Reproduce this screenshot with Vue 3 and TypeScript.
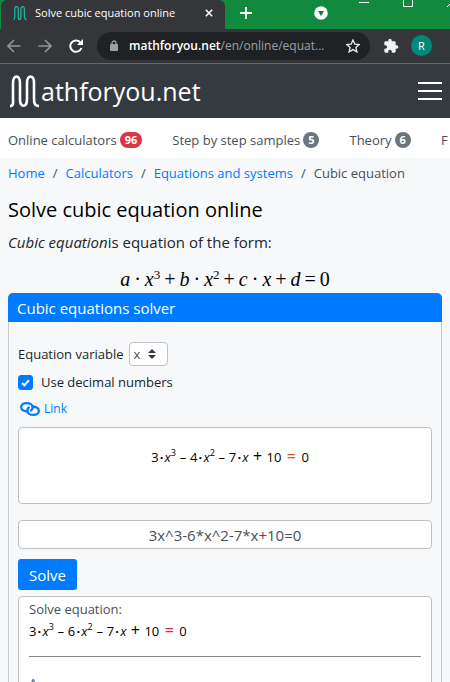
<script setup lang="ts">
import { ref } from 'vue'

type Kind = 'num' | 'dot' | 'var' | 'sup' | 'op' | 'sum' | 'eq'
interface Token { kind: Kind; text: string }

const t = (kind: Kind, text: string): Token => ({ kind, text })

// Tokens of a cubic equation in expanded form with the given quadratic coefficient.
const cubic = (quadratic: number): Token[] => [
  t('num', '3'), t('dot', '·'), t('var', 'x'), t('sup', '3'), t('op', '–'),
  t('num', String(quadratic)), t('dot', '·'), t('var', 'x'), t('sup', '2'), t('op', '–'),
  t('num', '7'), t('dot', '·'), t('var', 'x'), t('sum', '+'),
  t('num', '10'), t('eq', '='), t('num', '0'),
]

const preview = cubic(4)
const result = cubic(6)

const general: Token[] = [
  t('var', 'a'), t('dot', '·'), t('var', 'x'), t('sup', '3'), t('op', '+'),
  t('var', 'b'), t('dot', '·'), t('var', 'x'), t('sup', '2'), t('op', '+'),
  t('var', 'c'), t('dot', '·'), t('var', 'x'), t('op', '+'),
  t('var', 'd'), t('op', '='), t('num', '0'),
]

const sections = [
  { label: 'Online calculators', count: '96', tone: 'red' },
  { label: 'Step by step samples', count: '5', tone: 'grey' },
  { label: 'Theory', count: '6', tone: 'grey' },
  { label: 'F', count: '', tone: '' },
]
const crumbs = ['Home', 'Calculators', 'Equations and systems']

const variable = ref('x')
const decimals = ref(true)
const expression = ref('3x^3-6*x^2-7*x+10=0')
</script>

<template>
  <div class="window">
    <div class="tabs">
      <div class="tab">
        <svg class="tab-logo" viewBox="0 0 32 34" aria-hidden="true">
          <path d="M1 32C4 32 4 28 4 24V9C4 0 12 0 12 9V25C12 34 18 34 18 25V9C18 0 26 0 26 9V24C26 29 27 32 31 32" />
        </svg>
        <span class="tab-title">Solve cubic equation online</span>
        <button class="icon-btn tab-close" aria-label="Close tab">
          <svg width="8" height="8" viewBox="0 0 8 8"><path d="M.8.8l6.4 6.4M7.2.8L.8 7.2" stroke="#fff" stroke-width="1.6" /></svg>
        </button>
      </div>
      <button class="icon-btn new-tab" aria-label="New tab">
        <svg width="12" height="12" viewBox="0 0 12 12"><path d="M6 0v12M0 6h12" stroke="#fff" stroke-width="1.8" /></svg>
      </button>
      <button class="icon-btn tab-search" aria-label="Search tabs">
        <svg width="14" height="14" viewBox="0 0 14 14"><circle cx="7" cy="7" r="6.8" fill="#fff" /><path d="M4 5h6L7 10z" fill="#17793b" /></svg>
      </button>
      <div class="window-controls">
        <button class="icon-btn" aria-label="Minimize"><svg width="10" height="10" viewBox="0 0 10 10"><path d="M0 5.5h10" stroke="#fff" /></svg></button>
        <button class="icon-btn" aria-label="Maximize"><svg width="10" height="10" viewBox="0 0 10 10"><path d="M.5.5h9v9h-9z" fill="none" stroke="#fff" /></svg></button>
        <button class="icon-btn" aria-label="Close"><svg width="10" height="10" viewBox="0 0 10 10"><path d="M0 0l10 10M10 0L0 10" stroke="#fff" /></svg></button>
      </div>
    </div>

    <div class="toolbar">
      <button class="icon-btn" aria-label="Back">
        <svg width="14" height="14" viewBox="0 0 14 14"><path d="M13.5 7H1.5M7 1L1 7l6 6" fill="none" stroke="#929497" stroke-width="1.6" /></svg>
      </button>
      <button class="icon-btn" aria-label="Forward">
        <svg width="14" height="14" viewBox="0 0 14 14"><path d="M.5 7h12M7 1l6 6-6 6" fill="none" stroke="#929497" stroke-width="1.6" /></svg>
      </button>
      <button class="icon-btn" aria-label="Reload">
        <svg width="14" height="14" viewBox="0 0 14 14"><path d="M12.4 9A5.7 5.7 0 1 1 11.2 3.2" fill="none" stroke="#fff" stroke-width="2" /><path d="M14 0v6H8z" fill="#fff" /></svg>
      </button>
      <div class="address">
        <svg width="8" height="11" viewBox="0 0 8 11" aria-hidden="true"><path d="M2 5V3a2 2 0 0 1 4 0v2" fill="none" stroke="#9aa0a6" stroke-width="1.3" /><rect y="4" width="8" height="7" rx="1" fill="#9aa0a6" /></svg>
        <span class="url"><b>mathforyou.net</b>/en/online/equat...</span>
        <button class="icon-btn" aria-label="Bookmark this page">
          <svg width="14" height="14" viewBox="0 0 14 14"><path d="M7 1l1.8 4.1 4.4.4-3.3 3 1 4.4L7 10.6l-3.9 2.3 1-4.4-3.3-3 4.4-.4z" fill="none" stroke="#e8eaed" stroke-width="1.3" /></svg>
        </button>
      </div>
      <button class="icon-btn extensions" aria-label="Extensions">
        <svg width="16" height="16" viewBox="0 0 24 24"><path d="M20.5 11H19V7c0-1.1-.9-2-2-2h-4V3.5a2.5 2.5 0 0 0-5 0V5H4c-1.1 0-2 .9-2 2v3.800h1.500a2.700 2.700 0 0 1 0 5.400H2V20c0 1.100.900 2 2 2h3.800v-1.500a2.700 2.700 0 0 1 5.400 0V22H17c1.100 0 2-.900 2-2v-4h1.500a2.500 2.500 0 0 0 0-5z" fill="#f1f3f4" /></svg>
      </button>
      <button class="avatar" aria-label="Profile">R</button>
    </div>

    <header class="site-header">
      <a class="brand" href="#">
        <svg width="32" height="34" viewBox="0 0 32 34" aria-hidden="true">
          <path d="M2 32C6 32 5 28 5 24V9C5 .5 12 .5 12 9V25C12 34 19 34 19 25V9C19 .5 26 .5 26 9V24C26 28 26 32 31 32" fill="none" stroke="#fff" stroke-width="2.6" />
        </svg>
        <span>athforyou.net</span>
      </a>
      <button class="icon-btn" aria-label="Menu">
        <svg width="24" height="18" viewBox="0 0 24 18"><path d="M0 1h24M0 9h24M0 17h24" stroke="#fff" stroke-width="2" /></svg>
      </button>
    </header>

    <nav class="sections" aria-label="Sections">
      <a v-for="s in sections" :key="s.label" href="#">
        {{ s.label }}<span v-if="s.count" class="badge" :class="s.tone">{{ s.count }}</span>
      </a>
    </nav>

    <main>
      <nav class="crumbs" aria-label="Breadcrumb">
        <template v-for="c in crumbs" :key="c">
          <a href="#">{{ c }}</a><span class="slash">/</span>
        </template>
        <span>Cubic equation</span>
      </nav>

      <h1>Solve cubic equation online</h1>
      <p class="intro"><em>Cubic equation</em>is equation of the form:</p>
      <div class="general">
        <span v-for="(k, i) in general" :key="i" :class="k.kind">{{ k.text }}</span>
      </div>

      <section class="card">
        <h2>Cubic equations solver</h2>
        <form class="solver" @submit.prevent>
          <div class="field variable">
            <label for="variable">Equation variable</label>
            <span class="select">
              <select id="variable" v-model="variable"><option>x</option></select>
              <svg width="8" height="10" viewBox="0 0 8 10" aria-hidden="true"><path d="M0 4l4-4 4 4zM0 6l4 4 4-4z" fill="#343a40" /></svg>
            </span>
          </div>
          <div class="field decimals">
            <span class="check">
              <input id="decimals" v-model="decimals" type="checkbox" />
              <svg v-if="decimals" width="9" height="8" viewBox="0 0 9 8" aria-hidden="true"><path d="M1 4l2.300 2.300L8 1.300" fill="none" stroke="#fff" stroke-width="2" /></svg>
            </span>
            <label for="decimals">Use decimal numbers</label>
          </div>
          <a class="link" href="#">
            <svg width="20" height="14" viewBox="0 0 20 14" aria-hidden="true">
              <g fill="none" stroke="#007bff" stroke-width="2.200">
                <path d="M8.500 9.300C4.500 9.800 1.100 8 1.100 5.200 1.100 2.700 3.500 1.100 6.600 1.100c3.400 0 6.100 1.700 6.100 4.200 0 1.600-.9 2.900-2.400 3.600" />
                <path d="M11.500 4.700c4-.5 7.400 1.300 7.400 4.100 0 2.500-2.400 4.100-5.500 4.100-3.400 0-6.100-1.700-6.100-4.200 0-1.600.9-2.900 2.400-3.600" />
              </g>
            </svg>
            <span>Link</span>
          </a>
          <div class="preview box">
            <div class="equation"><span v-for="(k, i) in preview" :key="i" :class="k.kind">{{ k.text }}</span></div>
          </div>
          <input v-model="expression" class="expression" type="text" aria-label="Equation" />
          <button class="solve" type="submit">Solve</button>
          <div class="result box">
            <p>Solve equation:</p>
            <div class="equation red-eq"><span v-for="(k, i) in result" :key="i" :class="k.kind">{{ k.text }}</span></div>
            <hr />
            <p class="next">A</p>
          </div>
        </form>
      </section>
    </main>
  </div>
</template>

<style>
body { margin: 0; background: #f7f8fa; }
</style>

<style scoped>
* { box-sizing: border-box; }
.window {
  display: flex; flex-direction: column; height: 100vh; overflow: hidden;
  font-family: "Open Sans", "Noto Sans", sans-serif; font-size: 13px; line-height: 20px;
  color: #212529; background: #f7f8fa;
}
.window > * { flex-shrink: 0; }
a { color: #007bff; text-decoration: none; }
button, input, select { font: inherit; margin: 0; }
svg { display: block; flex-shrink: 0; }
.icon-btn { display: flex; padding: 0; border: 0; background: none; }

.tabs { display: flex; align-items: center; height: 29px; padding-left: 1px; background: #128a3d; overflow: hidden; }
.tabs > * { flex-shrink: 0; }
.tab { display: flex; align-items: center; width: 224px; height: 29px; padding: 0 12px 4px; background: #35363a; border-radius: 6px 6px 0 0; color: #fff; font-size: 11px; }
.tab-logo { width: 14px; height: 16px; fill: none; stroke: #1fb5a0; stroke-width: 3; }
.tab-title { margin-left: 8px; white-space: nowrap; }
.tab-close { margin-left: auto; }
.new-tab { margin: 0 0 4px 15px; }
.tab-search { margin: 0 0 4px 62px; }
.window-controls { display: flex; gap: 34px; margin-left: 31px; margin-bottom: 26px; }

.toolbar { display: flex; align-items: center; gap: 17px; height: 35px; padding: 0 18px 1px 7px; background: #35363a; border-bottom: 1px solid #66676a; }
.address { display: flex; align-items: center; flex: 1; min-width: 0; height: 28px; margin-left: -3px; padding: 0 10px 0 13px; border-radius: 14px; background: #202124; color: #9aa0a6; font-size: 12px; }
.url { flex: 1; margin-left: 11px; white-space: nowrap; overflow: hidden; }
.url b { color: #fff; font-weight: 600; }
.extensions { margin-left: -4px; }
.avatar { width: 21px; height: 21px; margin-left: -5px; padding: 0; border: 0; border-radius: 50%; background: #00897b; color: #fff; font-size: 11px; line-height: 21px; }

.site-header { display: flex; align-items: center; justify-content: space-between; height: 54px; padding: 0 8px; background: #343a40; }
.brand { display: flex; align-items: center; gap: 1px; color: #fff; font-size: 25px; line-height: 32px; }

.sections { display: flex; gap: 30px; height: 40px; align-items: center; padding: 4px 8px 0; overflow: hidden; background: #fff; white-space: nowrap; }
.sections a { display: flex; align-items: center; gap: 3px; color: #495057; }
.badge { padding: 0 5px; border-radius: 8px; color: #fff; font-size: 11px; font-weight: 700; line-height: 16px; }
.red { background: #dc3545; }
.grey { background: #6c757d; }

main { padding: 0 8px; }
.crumbs { display: flex; gap: 8px; padding-top: 5px; white-space: nowrap; color: #495057; }
h1 { margin: 15px 0 0; color: #000; font-size: 20px; font-weight: 400; line-height: 24px; }
.intro { margin: 10px 0 0; font-size: 15px; }

.general { display: flex; justify-content: center; align-items: baseline; height: 34px; margin-top: 7px; color: #000; font-family: "Liberation Serif", serif; font-size: 20px; line-height: 40px; }
.general .var { font-style: italic; }
.general .dot { padding: 0 4px; }
.general .op { padding: 0 4px; }
.general .sup { font-size: 13px; line-height: 13px; position: relative; top: -7px; }

.card { border: 1px solid #c9cbcd; border-radius: 5px; }
h2 { margin: -1px -1px 0; padding: 5px 9px 4px; border-radius: 5px 5px 0 0; background: #007bff; color: #fff; font-size: 15px; font-weight: 400; line-height: 20px; }
.solver { display: flex; flex-direction: column; padding: 20px 9px 0; }
.field { display: flex; align-items: center; }
.variable { gap: 5px; height: 24px; }
.select { position: relative; display: flex; }
.select select { appearance: none; width: 39px; height: 24px; padding: 0 4px; border: 1px solid #bfc3c7; border-radius: 4px; background: #fff; color: #495057; font-size: 13px; line-height: 20px; }
.select svg { position: absolute; right: 12px; top: 7px; pointer-events: none; }
.decimals { gap: 8px; margin-top: 6px; }
.check { position: relative; display: flex; }
.check input { appearance: none; width: 15px; height: 15px; border: 1px solid #007bff; border-radius: 3px; }
.check input:checked { background: #007bff; }
.check svg { position: absolute; left: 3px; top: 4px; pointer-events: none; }
.link { display: flex; align-items: center; align-self: flex-start; gap: 4px; margin: 7px 0 0 2px; font-size: 12px; }

.box { border: 1px solid #bfc1c3; border-radius: 4px; background: #fff; }
.preview { display: flex; justify-content: center; height: 77px; margin-top: 8px; padding: 18px 0 0 10px; }
.equation { display: flex; align-items: baseline; color: #000; font-size: 13px; line-height: 20px; }
.equation .var { font-style: italic; }
.equation .dot { width: 6px; text-align: center; font-weight: 700; }
.equation .sup { font-size: 9px; line-height: 9px; position: relative; top: -6px; }
.equation .op { width: 14px; text-align: center; }
.equation .sum { width: 18px; text-align: center; font-size: 16px; }
.equation .eq { width: 20px; text-align: center; font-size: 16px; color: #cf5a24; }
.equation.red-eq .eq { color: #dc2535; }
.expression { width: 100%; height: 29px; margin-top: 16px; padding: 0; border: 1px solid #bfc1c3; border-radius: 4px; background: #fff; color: #495057; font-size: 15px; text-align: center; }
.solve { align-self: flex-start; margin-top: 10px; padding: 0 11px; height: 31px; border: 0; border-radius: 3px; background: #007bff; color: #fff; font-size: 15px; }
.result { margin-top: 6px; padding: 2px 10px; }
.result p { margin: 0; color: #495057; }
.result .equation { margin-top: 1px; }
.result hr { width: 100%; margin: 15px 0 0; border: 0; border-top: 1px solid #888; }
.result .next { margin-top: 16px; }
</style>
